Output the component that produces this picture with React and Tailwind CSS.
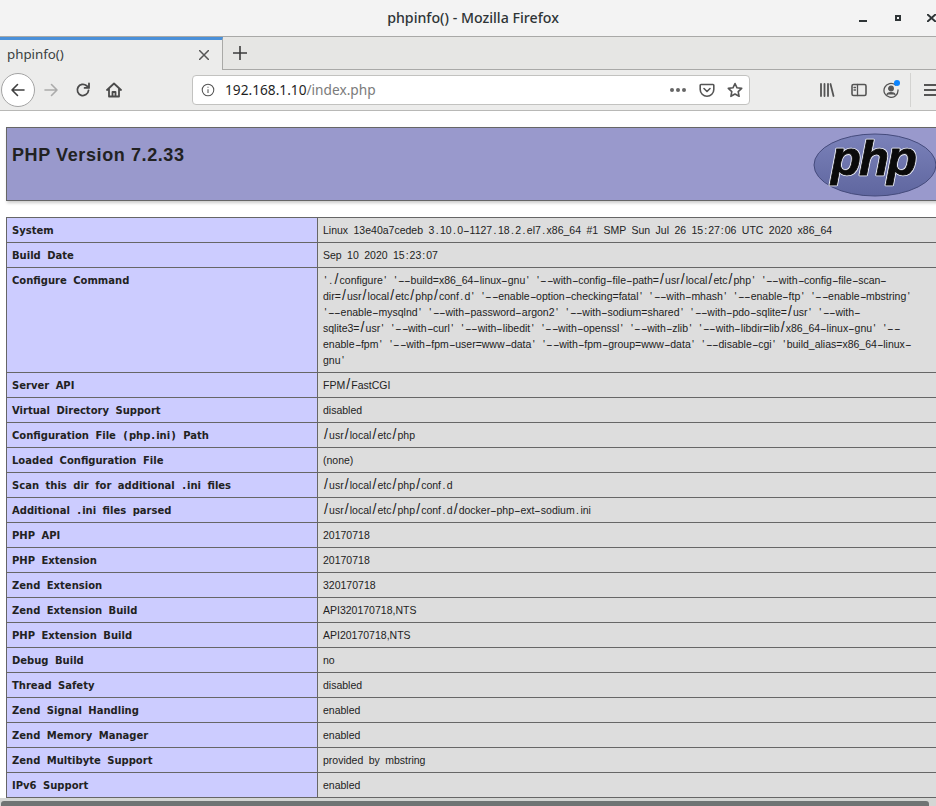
const configureLines = [
  "'./configure' '--build=x86_64-linux-gnu' '--with-config-file-path=/usr/local/etc/php' '--with-config-file-scan-",
  "dir=/usr/local/etc/php/conf.d' '--enable-option-checking=fatal' '--with-mhash' '--enable-ftp' '--enable-mbstring'",
  "'--enable-mysqlnd' '--with-password-argon2' '--with-sodium=shared' '--with-pdo-sqlite=/usr' '--with-",
  "sqlite3=/usr' '--with-curl' '--with-libedit' '--with-openssl' '--with-zlib' '--with-libdir=lib/x86_64-linux-gnu' '--",
  "enable-fpm' '--with-fpm-user=www-data' '--with-fpm-group=www-data' '--disable-cgi' 'build_alias=x86_64-linux-",
  "gnu'",
];

const rows = [
  ['System', 'Linux 13e40a7cedeb 3.10.0-1127.18.2.el7.x86_64 #1 SMP Sun Jul 26 15:27:06 UTC 2020 x86_64'],
  ['Build Date', 'Sep 10 2020 15:23:07'],
  ['Configure Command', configureLines],
  ['Server API', 'FPM/FastCGI'],
  ['Virtual Directory Support', 'disabled'],
  ['Configuration File (php.ini) Path', '/usr/local/etc/php'],
  ['Loaded Configuration File', '(none)'],
  ['Scan this dir for additional .ini files', '/usr/local/etc/php/conf.d'],
  ['Additional .ini files parsed', '/usr/local/etc/php/conf.d/docker-php-ext-sodium.ini'],
  ['PHP API', '20170718'],
  ['PHP Extension', '20170718'],
  ['Zend Extension', '320170718'],
  ['Zend Extension Build', 'API320170718,NTS'],
  ['PHP Extension Build', 'API20170718,NTS'],
  ['Debug Build', 'no'],
  ['Thread Safety', 'disabled'],
  ['Zend Signal Handling', 'enabled'],
  ['Zend Memory Manager', 'enabled'],
  ['Zend Multibyte Support', 'provided by mbstring'],
  ['IPv6 Support', 'enabled'],
];

// the reference font sets punctuation much wider than Liberation Sans does
const valuePunct = {
  '-': 'inline-block w-[6.4px] origin-left scale-x-[1.9]',
  '/': 'px-[1.1px] text-[14px] leading-[0]',
  "'": 'px-[1.4px]',
  '.': 'px-[1.4px]',
  ':': 'px-[1px]',
};
const labelPunct = {
  '.': 'px-[1px]',
  '(': 'px-[1px]',
  ')': 'px-[1px]',
};

function Wide({ text, pattern, classes }) {
  return text.split(pattern).map((part, i) =>
    i % 2 === 1 ? <span key={i} className={classes[part]}>{part}</span> : part
  );
}

function Icon({ className, children, fill = 'none', strokeWidth = '1.6' }) {
  return (
    <svg viewBox="0 0 16 16" fill={fill} stroke="currentColor" strokeWidth={strokeWidth} strokeLinecap="round" strokeLinejoin="round" className={className}>
      {children}
    </svg>
  );
}

function TitleBar() {
  return (
    <div className="relative flex h-[37px] items-center justify-center bg-[#f3f3f3] pl-[10px] border-b border-[#a9a9a7]">
      <span className="font-['Noto_Sans',sans-serif] text-[14.2px] font-medium text-[#2e3436]">phpinfo() - Mozilla Firefox</span>
      <div className="absolute inset-y-0 right-0 text-[#2e3436]">
        <span className="absolute right-[69px] top-[20px] h-[2px] w-[8px] bg-[#2e3436]" />
        <span className="absolute right-[35px] top-[15px] h-[6px] w-[6px] border-2 border-[#2e3436]" />
        <svg viewBox="0 0 9 8" className="absolute right-0 top-[14px] h-[8px] w-[9px]" stroke="currentColor" strokeWidth="2"><path d="M0 0 9 8M9 0 0 8" /></svg>
      </div>
    </div>
  );
}

function TabBar() {
  return (
    <div className="flex h-[33px] bg-[#e6e6e4] border-b border-[#a9a9a7]">
      <div className="flex h-[33px] w-[223px] items-center justify-between border-t-[3px] border-r border-t-[#4a90d9] border-r-[#a9a9a7] bg-[#ececeb] pl-[7px] pr-[13px]">
        <span className="text-[13.3px] text-[#3a3f41]">phpinfo()</span>
        <svg viewBox="0 0 10 10" className="h-[10px] w-[10px] text-[#555]" stroke="currentColor" strokeWidth="1.5"><path d="M0 0 10 10M10 0 0 10" /></svg>
      </div>
      <div className="flex w-[33px] items-center justify-center pb-[1px]">
        <svg viewBox="0 0 14 14" className="h-[14px] w-[14px] text-[#3c3c3c]" stroke="currentColor" strokeWidth="1.6"><path d="M7 0v14M0 7h14" /></svg>
      </div>
    </div>
  );
}

function Toolbar() {
  return (
    <div className="flex h-[41px] items-center bg-[#ececeb] border-b border-[#b8b8b6] text-[#4a4a4a]">
      <div className="ml-[1px] flex h-[34px] w-[34px] items-center justify-center rounded-full border border-[#a4a4a4] bg-white">
        <Icon className="h-[16px] w-[16px] text-[#3f3f3f]"><path d="M14 8H2M7.500 2.500 2 8l5.500 5.500" /></Icon>
      </div>
      <Icon className="ml-[8px] h-[16px] w-[16px] text-[#ababab]"><path d="M2 8h12M8.500 2.500 14 8l-5.500 5.500" /></Icon>
      <Icon className="ml-[16px] h-[16px] w-[16px]" strokeWidth="1.8"><path d="M13.500 8.500A5.600 5.600 0 1 1 11.600 3.700L14 5.600M14 1.500v4.400H9.600" /></Icon>
      <Icon className="ml-[15px] h-[16px] w-[16px]" strokeWidth="1.8"><path d="M1 8 8 1.500 15 8M3 6.500V14.500h10V6.500M6.500 14.500V10h3v4.500" /></Icon>
      <div className="ml-[70px] flex h-[30px] w-[558px] items-center rounded-[4px] border border-[#c2c2c0] bg-white">
        <svg viewBox="0 0 16 16" className="ml-[8px] h-[14px] w-[14px] text-[#555]" fill="none" stroke="currentColor" strokeWidth="1.2">
          <circle cx="8" cy="8" r="6.600" />
          <path d="M8 7v4.500M8 4.300v1.200" />
        </svg>
        <span className="ml-[10px] text-[13.7px] text-[#1f1f1f]">192.168.1.10<span className="text-[#7b7b7b]">/index.php</span></span>
        <span className="ml-auto flex gap-[2px]">
          <span className="h-[4px] w-[4px] rounded-full bg-[#666]" />
          <span className="h-[4px] w-[4px] rounded-full bg-[#666]" />
          <span className="h-[4px] w-[4px] rounded-full bg-[#666]" />
        </span>
        <Icon className="ml-[13px] h-[16px] w-[16px] text-[#555]"><path d="M2 2.500h12a.800.800 0 0 1 .800.800V7.500a6.800 6.800 0 0 1-13.600 0V3.300a.800.800 0 0 1 .800-.800ZM5 6.500l3 3 3-3" /></Icon>
        <Icon className="ml-[12px] mr-[6px] h-[16px] w-[16px] text-[#555]"><path d="M8 1.500 10 5.800l4.700.600-3.500 3.200.900 4.700L8 12l-4.100 2.300.900-4.700L1.300 6.400 6 5.800Z" /></Icon>
      </div>
      <Icon className="ml-[69px] h-[16px] w-[16px] text-[#555]" strokeWidth="1.8"><path d="M2 2v12M5.500 2v12M9 2v12M11.500 2l3 12" /></Icon>
      <Icon className="ml-[16px] h-[16px] w-[16px] text-[#555]"><rect x="1" y="2.500" width="14" height="11" rx="1.500" /><path d="M6.500 2.500v11M3 5.500h1.500M3 8h1.500" strokeWidth="1.300" /></Icon>
      <div className="relative ml-[16px] h-[16px] w-[16px] text-[#555]">
        <Icon className="h-[16px] w-[16px]" strokeWidth="1.300"><path d="M12.500 3A7 7 0 1 0 15 8" /><circle cx="8" cy="6.500" r="2.300" fill="currentColor" /><path d="M4 12.500c1-2.500 7-2.500 8 0" fill="currentColor" /></Icon>
        <span className="absolute right-[-1px] top-[-2px] h-[6px] w-[6px] rounded-full bg-[#0a84ff]" />
      </div>
      <span className="ml-[11px] h-[34px] w-px bg-[#d3d3d1]" />
      <div className="ml-[13px] flex w-[12px] flex-col gap-[3px] overflow-hidden">
        <span className="h-[2px] w-[16px] bg-[#555]" />
        <span className="h-[2px] w-[16px] bg-[#555]" />
        <span className="h-[2px] w-[16px] bg-[#555]" />
      </div>
    </div>
  );
}

function PhpLogo() {
  return (
    <svg viewBox="0 0 124 64" className="h-[64px] w-[124px] overflow-visible">
      <defs>
        <linearGradient id="phpOval" x1="0" y1="0" x2="0" y2="1">
          <stop offset="0" stopColor="#7b82ba" />
          <stop offset="1" stopColor="#5f669f" />
        </linearGradient>
      </defs>
      <ellipse cx="62" cy="32" rx="61" ry="31" fill="url(#phpOval)" stroke="#454b7c" strokeWidth="1" />
      <text x="60" y="42" textAnchor="middle" fontFamily="'Liberation Sans', sans-serif" fontWeight="700" fontStyle="italic" fontSize="49" letterSpacing="-2" fill="#0a0a0a" stroke="#eef0f8" strokeWidth="2.600" strokeLinejoin="round">php</text>
      <text x="60" y="42" textAnchor="middle" fontFamily="'Liberation Sans', sans-serif" fontWeight="700" fontStyle="italic" fontSize="49" letterSpacing="-2" fill="#0a0a0a" stroke="#0a0a0a" strokeWidth="0.800">php</text>
    </svg>
  );
}

function Value({ value }) {
  const lines = Array.isArray(value) ? value : [value];
  return lines.map((line) => (
    <div key={line}>
      <Wide text={line} pattern={/([-/'.:])/} classes={valuePunct} />
    </div>
  ));
}

export default function App() {
  return (
    <div className="h-[806px] w-[936px] overflow-hidden bg-white font-['Noto_Sans','DejaVu_Sans',sans-serif]">
      <TitleBar />
      <TabBar />
      <Toolbar />
      <div className="relative h-[695px] overflow-hidden pt-[16px] pl-[6px]">
        <div className="flex h-[74px] w-[934px] items-start justify-between border border-[#666] bg-[#9999cc] pl-[5px] shadow-[1px_2px_3px_#ccc]">
          <h1 className="mt-[16px] font-['Liberation_Sans',sans-serif] text-[18px] font-bold leading-[22px] tracking-[0.6px] text-[#222]">PHP Version 7.2.33</h1>
          <div className="mt-[5px] mr-[2px]"><PhpLogo /></div>
        </div>
        <table className="mt-[16px] w-[934px] table-fixed border-collapse text-[10.5px] leading-[16px]">
          <colgroup>
            <col className="w-[311px]" />
            <col />
          </colgroup>
          <tbody>
            {rows.map(([label, value]) => (
              <tr key={label}>
                <td className="border border-[#666] bg-[#ccccff] pt-[5px] pb-[3px] px-[5px] align-top font-['DejaVu_Sans',sans-serif] text-[10px] font-bold text-[#222] [word-spacing:3px]">
                  <Wide text={label} pattern={/([.()])/} classes={labelPunct} />
                </td>
                <td className="whitespace-nowrap border border-[#666] bg-[#dddddd] px-[5px] py-[4px] align-top font-['Liberation_Sans',sans-serif] text-[#222] [word-spacing:2.5px]">
                  <Value value={value} />
                </td>
              </tr>
            ))}
          </tbody>
        </table>
        <div className="absolute inset-x-0 bottom-0 h-[8px] bg-[#d4d6d4]">
          <div className="absolute bottom-0 left-[1px] right-[7px] h-[5px] rounded-t-[3px] bg-[#6f7474]" />
        </div>
      </div>
    </div>
  );
}
